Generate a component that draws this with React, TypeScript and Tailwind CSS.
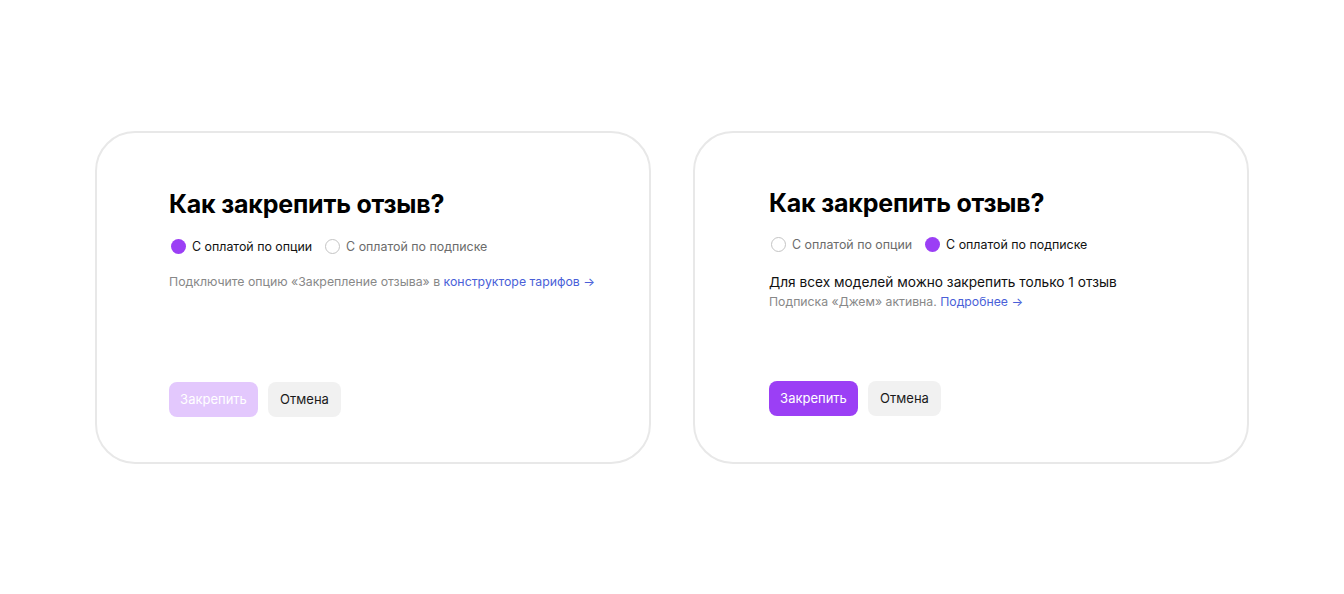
import React from "react";

const font = { fontFamily: 'Inter, "Noto Sans", sans-serif' };

function Radio({ checked, label }: { checked: boolean; label: string }) {
  return (
    <div className="flex items-center gap-[4px]">
      <span className="w-[19px] h-[19px] flex items-center justify-center">
        {checked ? (
          <span className="block w-[15px] h-[15px] rounded-full bg-[#9b3ff5]" />
        ) : (
          <span className="block w-[15px] h-[15px] rounded-full border-[1.5px] border-[#c4c4c4] bg-white" />
        )}
      </span>
      <span className={`text-[12.4px] leading-5 ${checked ? "text-[#111111]" : "text-[#6b6b6b]"}`}>{label}</span>
    </div>
  );
}

function Buttons({ disabled }: { disabled: boolean }) {
  return (
    <div className="flex gap-[10px]">
      <button
        className={`h-[35px] w-[89px] rounded-[8px] text-[13px] pt-[2px] ${
          disabled ? "bg-[#e3c8fd] text-white" : "bg-[#9b3ff5] text-white"
        }`}
      >
        Закрепить
      </button>
      <button className="h-[35px] w-[73px] rounded-[8px] bg-[#f1f1f1] text-[13px] pt-[2px] text-[#1a1a1a]">Отмена</button>
    </div>
  );
}

export default function App() {
  return (
    <div className="w-[1344px] h-[594px] bg-white flex items-center justify-center gap-[42px]" style={font}>
      <div className="w-[556px] h-[333px] rounded-[40px] border-2 border-[#e8e8e8] flex flex-col pl-[72px] pt-[55px] pb-[45px]">
        <h2 className="text-[25px] leading-8 font-bold text-black tracking-[-0.2px]">Как закрепить отзыв?</h2>
        <div className="mt-[17px] flex items-center gap-[11px] h-5">
          <Radio checked label="С оплатой по опции" />
          <Radio checked={false} label="С оплатой по подписке" />
        </div>
        <p className="mt-[15px] text-[12.3px] leading-5 text-[#888888]">
          Подключите опцию «Закрепление отзыва» в <span className="text-[#4a5fd8]">конструкторе тарифов →</span>
        </p>
        <div className="mt-auto">
          <Buttons disabled />
        </div>
      </div>
      <div className="w-[556px] h-[333px] rounded-[40px] border-2 border-[#e8e8e8] flex flex-col pl-[74px] pt-[54px] pb-[46px]">
        <h2 className="text-[25px] leading-8 font-bold text-black tracking-[-0.2px]">Как закрепить отзыв?</h2>
        <div className="mt-4 flex items-center gap-[11px] h-5">
          <Radio checked={false} label="С оплатой по опции" />
          <Radio checked label="С оплатой по подписке" />
        </div>
        <p className="mt-[17px] text-[13.7px] leading-5 text-[#111111]">Для всех моделей можно закрепить только 1 отзыв</p>
        <p className="text-[12.25px] leading-5 text-[#888888]">
          Подписка «Джем» активна. <span className="text-[#4a5fd8]">Подробнее →</span>
        </p>
        <div className="mt-auto">
          <Buttons disabled={false} />
        </div>
      </div>
    </div>
  );
}
